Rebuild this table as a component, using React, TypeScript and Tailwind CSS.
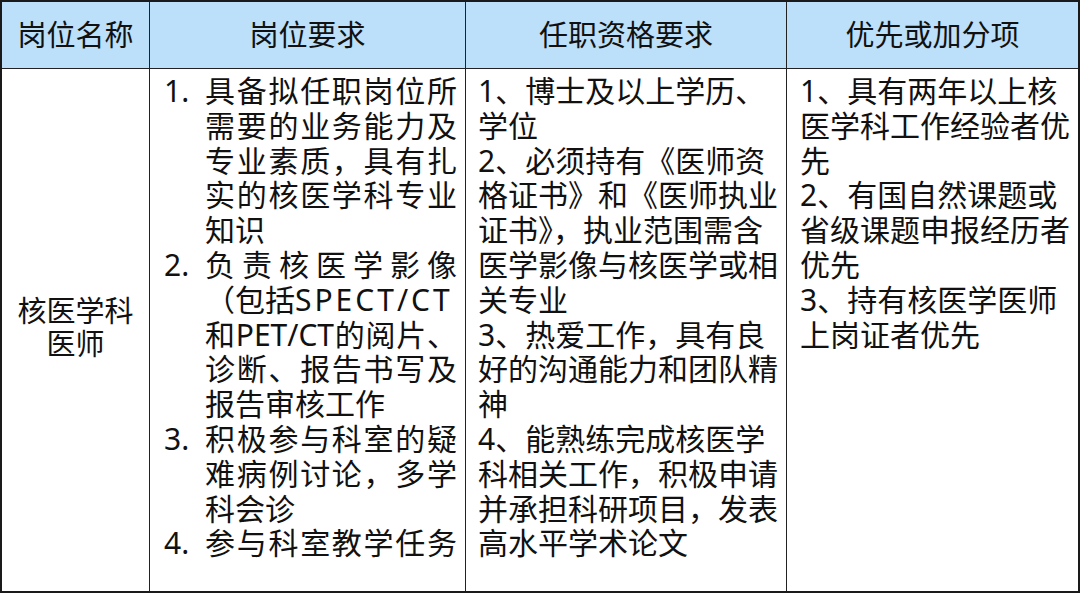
import React from 'react';

const font = "font-['Noto_Sans','Noto_Sans_CJK_SC',sans-serif]";

const duties: { n: string; lines: React.ReactNode[] }[] = [
  { n: '1.', lines: ['具备拟任职岗位所', '需要的业务能力及', '专业素质，具有扎', '实的核医学科专业', '知识'] },
  {
    n: '2.',
    lines: [
      '负责核医学影像',
      <span key="spect" className="whitespace-nowrap">
        （包括<span className="tracking-[3px]">SPECT/CT</span>
      </span>,
      '和PET/CT的阅片、',
      '诊断、报告书写及',
      '报告审核工作',
    ],
  },
  { n: '3.', lines: ['积极参与科室的疑', '难病例讨论，多学', '科会诊'] },
  { n: '4.', lines: ['参与科室教学任务'] },
];

const quals = [
  '1、博士及以上学历、',
  '学位',
  '2、必须持有《医师资',
  '格证书》和《医师执业',
  '证书》，执业范围需含',
  '医学影像与核医学或相',
  '关专业',
  '3、热爱工作，具有良',
  '好的沟通能力和团队精',
  '神',
  '4、能熟练完成核医学',
  '科相关工作，积极申请',
  '并承担科研项目，发表',
  '高水平学术论文',
];

const bonus = [
  '1、具有两年以上核',
  '医学科工作经验者优',
  '先',
  '2、有国自然课题或',
  '省级课题申报经历者',
  '优先',
  '3、持有核医学医师',
  '上岗证者优先',
];

const headers = ['岗位名称', '岗位要求', '任职资格要求', '优先或加分项'];

export default function App() {
  return (
    <div className={`w-[1080px] h-[593px] bg-white text-[#111] ${font}`}>
      <div className="w-full h-full border-2 border-[#1a1a1a] grid grid-cols-[148px_316px_321px_1fr] grid-rows-[67px_1fr]">
        {headers.map((h, i) => (
          <div
            key={h}
            className={`bg-[#bcdffa] border-b-[1.5px] border-[#222] flex items-center justify-center text-[29px] leading-none pb-[2px] ${
              i < 3 ? 'border-r-[1.5px]' : ''
            }`}
          >
            {h}
          </div>
        ))}

        {/* 岗位名称 */}
        <div className="border-r-[1.5px] border-[#222] flex flex-col items-center justify-center text-[29px] leading-[33px] pb-[6px]">
          <div>核医学科</div>
          <div>医师</div>
        </div>

        {/* 岗位要求 */}
        <div className="border-r-[1.5px] border-[#222] pl-[14px] pt-[5px] text-[30px] leading-[34.8px]">
          {duties.map((d) => (
            <div key={d.n} className="flex">
              <div className="w-[41px] shrink-0">{d.n}</div>
              <div className="w-[252px]">
                {d.lines.map((l, j) => (
                  <div
                    key={j}
                    className={`whitespace-nowrap ${
                      typeof l === 'string' && (j < d.lines.length - 1 || d.lines.length === 1)
                        ? 'text-justify [text-align-last:justify]'
                        : ''
                    }`}
                  >
                    {l}
                  </div>
                ))}
              </div>
            </div>
          ))}
        </div>

        {/* 任职资格要求 */}
        <div className="border-r-[1.5px] border-[#222] pl-[12px] pt-[5px] text-[30px] leading-[34.8px]">
          {quals.map((l) => (
            <div key={l} className="whitespace-nowrap">
              {l}
            </div>
          ))}
        </div>

        {/* 优先或加分项 */}
        <div className="pl-[13px] pt-[5px] text-[30px] leading-[34.8px]">
          {bonus.map((l) => (
            <div key={l} className="whitespace-nowrap">
              {l}
            </div>
          ))}
        </div>
      </div>
    </div>
  );
}
